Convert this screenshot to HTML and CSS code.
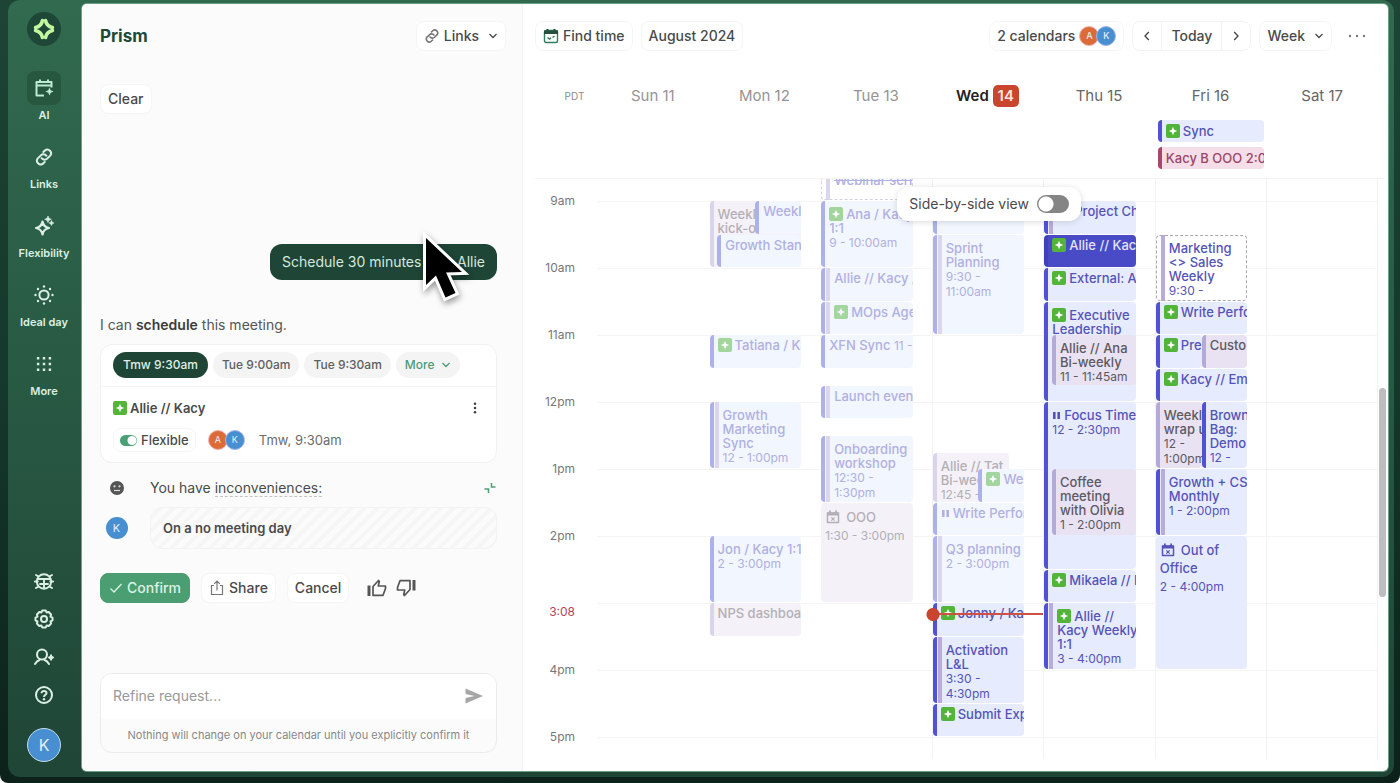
FILE: index.html
```html
<!DOCTYPE html>
<html lang="en">
<head>
<meta charset="utf-8">
<meta name="viewport" content="width=device-width, initial-scale=1">
<title>Prism</title>
<link rel="stylesheet" href="styles.css">
</head>
<body>
<svg class="sprite" aria-hidden="true">
  <symbol id="spark" viewBox="0 0 14 14"><rect width="14" height="14" rx="2" fill="#52b53a"/><path d="M7 2.800 8.200 5.800 11.200 7 8.200 8.200 7 11.200 5.800 8.200 2.800 7 5.800 5.800Z" fill="#fff"/></symbol>
  <symbol id="link" viewBox="0 0 20 20"><g fill="none" stroke="currentColor" stroke-width="2" stroke-linecap="round" stroke-linejoin="round"><path d="M7.600 11.200a3.700 3.700 0 0 0 5.600.4l3-3a3.700 3.700 0 0 0-5.200-5.200L9.300 5"/><path d="M12.400 8.800a3.700 3.700 0 0 0-5.600-.4l-3 3a3.700 3.700 0 0 0 5.200 5.200L10.700 15"/></g></symbol>
  <symbol id="down" viewBox="0 0 10 10"><path d="M1.500 3 5 6.500 8.500 3" fill="none" stroke="currentColor" stroke-width="1.300"/></symbol>
  <symbol id="pause" viewBox="0 0 9 10"><path d="M1 1h2.600v7H1zM5.400 1H8v7H5.400z" fill="currentColor"/></symbol>
  <symbol id="away" viewBox="0 0 14 14"><path d="M1.500 3h11v9.500h-11z" fill="none" stroke="currentColor" stroke-width="1.500" stroke-linejoin="round"/><path d="M1.500 2.500h11v3h-11zM3 .5h1.800v2H3zM9.200.5H11v2H9.200z" fill="currentColor"/><path d="m5.300 7.300 3.400 3.400m0-3.400-3.400 3.400" stroke="currentColor" stroke-width="1.200"/></symbol>
</svg>

<div class="frame">
  <nav class="rail" aria-label="Main">
    <a class="logo" href="#" aria-label="Home"><svg viewBox="0 0 24 24"><g fill="none" stroke="#c3f7a0" stroke-width="3.600" stroke-linejoin="round" stroke-linecap="round"><path d="M10.400 3.600Q9.500 9 3.600 10.600"/><path d="M13.600 3.600Q14.500 9 20.400 10.600"/><path d="M10.400 20.400Q9.500 15 3.600 13.400"/><path d="M13.600 20.400Q14.500 15 20.400 13.400"/></g></svg></a>
    <ul class="menu">
      <li><a class="menu-link is-on" href="#"><span class="tile"><svg viewBox="0 0 20 20"><g fill="none" stroke="currentColor" stroke-width="2" stroke-linejoin="round"><path d="M10 17.500H2.500V4h15v5.500M2.500 7.500h15"/><path d="M6 1.500V5M14 1.500V5"/></g><path d="m15.500 9.500 1.200 2.800 2.800 1.200-2.800 1.200-1.200 2.800-1.200-2.800-2.800-1.200 2.800-1.200Z" fill="currentColor"/></svg></span>AI</a></li>
      <li><a class="menu-link" href="#"><span class="tile"><svg><use href="#link"/></svg></span>Links</a></li>
      <li><a class="menu-link" href="#"><span class="tile"><svg viewBox="0 0 20 20"><path d="M8.500 5.500Q9.500 11 15 12 9.500 13 8.500 18.500 7.500 13 2 12 7.500 11 8.500 5.500Z" fill="none" stroke="currentColor" stroke-width="2.200" stroke-linejoin="round"/><path d="m14 0 1 2.300 2.300 1L15 4.300 14 6.600 13 4.300l-2.300-1L13 2.300ZM17.500 4.500l.8 1.800 1.700.7-1.700.7-.8 1.800-.8-1.800L15 7l1.700-.7Z" fill="currentColor" stroke="currentColor" stroke-width=".6"/></svg></span>Flexibility</a></li>
      <li><a class="menu-link" href="#"><span class="tile"><svg viewBox="0 0 20 20"><circle cx="10" cy="10" r="4.600" fill="none" stroke="currentColor" stroke-width="2"/><g fill="currentColor"><circle cx="10" cy="1.500" r="1.200"/><circle cx="10" cy="18.500" r="1.200"/><circle cx="1.500" cy="10" r="1.200"/><circle cx="18.500" cy="10" r="1.200"/><circle cx="4" cy="4" r="1.200"/><circle cx="16" cy="4" r="1.200"/><circle cx="4" cy="16" r="1.200"/><circle cx="16" cy="16" r="1.200"/></g></svg></span>Ideal day</a></li>
      <li><a class="menu-link" href="#"><span class="tile"><svg viewBox="0 0 20 20"><path d="M2.900 4.200h2.400M8.800 4.200h2.400M14.700 4.200h2.400M2.900 10h2.400M8.800 10h2.400M14.700 10h2.400M2.900 15.800h2.400M8.800 15.800h2.400M14.700 15.800h2.400" stroke="currentColor" stroke-width="2.400"/></svg></span>More</a></li>
    </ul>
    <div class="tools">
      <button aria-label="Report a bug"><svg viewBox="0 0 20 20"><g fill="none" stroke="currentColor" stroke-width="1.900" stroke-linecap="round"><circle cx="10" cy="10.500" r="7.200"/><path d="M3.500 8h13M10 8v9M6 13h8M.8 10.500h3M16.200 10.500h3M4.500 5.500 2 4M15.500 5.500 18 4M4.500 15.500 2 17M15.500 15.500 18 17"/></g></svg></button>
      <button aria-label="Settings"><svg viewBox="0 0 20 20"><g fill="none" stroke="currentColor" stroke-width="2" stroke-linejoin="round"><path d="M8.200 1.500h3.600l.8 2 2.100-.5 2.400 2.500-.6 2.200 2 1v2.700l-2 1 .6 2.200-2.400 2.400-2.100-.5-.8 2H8.200l-.8-2-2.100.5-2.400-2.400.6-2.200-2-1V8.700l2-1-.6-2.200L5.300 3l2.100.5Z"/><circle cx="10" cy="10" r="3"/></g></svg></button>
      <button aria-label="Invite"><svg viewBox="0 0 20 20"><g fill="none" stroke="currentColor" stroke-width="2" stroke-linecap="round"><circle cx="8" cy="7.500" r="5"/><path d="M1 17c1.500-2.500 3-3.500 4.500-4M15 17c-1.500-2.500-3-3.500-4.500-4"/></g><path d="m17 7.500 1 2 2 1-2 1-1 2-1-2-2-1 2-1Z" fill="currentColor" stroke="currentColor"/></svg></button>
      <button aria-label="Help"><svg viewBox="0 0 20 20"><circle cx="10" cy="10" r="8" fill="none" stroke="currentColor" stroke-width="2"/><path d="M7.500 8.300C7.500 5 12.700 5.200 12.500 8.200 12.400 9.800 10 9.800 10 12" fill="none" stroke="currentColor" stroke-width="2"/><circle cx="10" cy="14.200" r="1.200" fill="currentColor"/></svg></button>
    </div>
    <button class="avatar avatar-xl" aria-label="Account">K</button>
  </nav>

  <main class="panel">
    <section class="chat">
      <header class="chat-head">
        <h1>Prism</h1>
        <button class="btn"><svg class="i16 muted"><use href="#link"/></svg>Links<svg class="i10 trail"><use href="#down"/></svg></button>
      </header>
      <button class="btn clear">Clear</button>
      <p class="bubble">Schedule 30 minutes with Allie
        <svg class="pointer" viewBox="0 0 50 76"><path d="M5 9V56L15 46.500 24.500 68.500 34.500 64 25 43.500 41 43Z" fill="#000" stroke="#fff" stroke-width="6" paint-order="stroke"/></svg>
      </p>
      <p class="reply">I can <b>schedule</b> this meeting.</p>
      <article class="card">
        <div class="chips">
          <button class="chip chip-on">Tmw 9:30am</button>
          <button class="chip">Tue 9:00am</button>
          <button class="chip">Tue 9:30am</button>
          <button class="chip chip-more">More<svg class="i10"><use href="#down"/></svg></button>
        </div>
        <div class="card-title">
          <h2><svg class="i14"><use href="#spark"/></svg>Allie // Kacy</h2>
          <button class="plain" aria-label="Options"><svg class="i14" viewBox="0 0 14 14"><g fill="#444"><circle cx="7" cy="2.800" r="1.300"/><circle cx="7" cy="7" r="1.300"/><circle cx="7" cy="11.200" r="1.300"/></g></svg></button>
        </div>
        <div class="card-meta">
          <label class="flexible"><input type="checkbox" class="mini-switch" checked>Flexible</label>
          <span class="pair"><span class="avatar orange">A</span><span class="avatar">K</span></span>
          <span class="when">Tmw, 9:30am</span>
        </div>
      </article>
      <div class="notes">
        <div class="note">
          <svg class="face" viewBox="0 0 16 16"><circle cx="8" cy="8" r="7" fill="#555"/><circle cx="5.500" cy="6.300" r="1.100" fill="#ddd"/><circle cx="10.500" cy="6.300" r="1.100" fill="#ddd"/><path d="M5 10.500h6" stroke="#ddd" stroke-width="1.200"/></svg>
          <p>You have <span class="term">inconveniences:</span></p>
          <button class="plain" aria-label="Collapse"><svg class="i14" viewBox="0 0 14 14"><path d="M8.500 2v4h4M1.500 8h4v4" fill="none" stroke="#4f9f7a" stroke-width="1.600"/></svg></button>
        </div>
        <div class="note">
          <span class="avatar avatar-md">K</span>
          <p class="reason">On a no meeting day</p>
        </div>
      </div>
      <div class="actions">
        <button class="btn primary"><svg class="i14" viewBox="0 0 14 14"><path d="m1.500 7.500 3.500 3.500 7.500-8" fill="none" stroke="currentColor" stroke-width="1.300"/></svg>Confirm</button>
        <button class="btn"><svg class="i16 muted" viewBox="0 0 16 16"><path d="M5 5.500H2.500v9h11v-9H11M8 10.500V1M5.200 3.800 8 1l2.800 2.800" fill="none" stroke="currentColor" stroke-width="1.200"/></svg>Share</button>
        <button class="btn">Cancel</button>
        <span class="thumbs">
          <button class="plain" aria-label="Good"><svg class="i20" viewBox="0 0 20 20"><path d="M.5 7.500h3V18h-3z" fill="#555"/><path d="M6 8.500 11.500 2.500l.8.8L11.300 8H18.500v2.500L16 17.300H6Z" fill="none" stroke="#555" stroke-width="1.700" stroke-linejoin="round"/></svg></button>
          <button class="plain" aria-label="Bad"><svg class="i20" viewBox="0 0 20 20"><path d="M16.500 2h3v10.500h-3z" fill="#555"/><path d="M14 11.500 8.500 17.500l-.8-.8L8.700 12H1.500V9.500L4 2.700H14Z" fill="none" stroke="#555" stroke-width="1.700" stroke-linejoin="round"/></svg></button>
        </span>
      </div>
      <form class="composer">
        <div class="composer-row">
          <input type="text" aria-label="Refine request" placeholder="Refine request...">
          <button class="plain" type="button" aria-label="Send"><svg class="i20" viewBox="0 0 20 20"><path d="M1.500 2.500 19 10 1.500 17.500V12l9-2-9-2Z" fill="#a6a6a6"/></svg></button>
        </div>
        <p>Nothing will change on your calendar until you explicitly confirm it</p>
      </form>
    </section>

    <section class="calendar">
      <header class="bar">
        <button class="btn"><svg class="i16" viewBox="0 0 16 16"><rect x="1.500" y="2.500" width="13" height="12" rx="1.500" fill="none" stroke="#2f7d5b" stroke-width="1.400"/><path d="M1 2.500h14v3.500H1zM3.500 1h2v2h-2zM10.500 1h2v2h-2z" fill="#24513f"/><path d="M4.500 9.500 6.500 11 8 9.800M9.500 9.500l2-1.500" fill="none" stroke="#2f7d5b" stroke-width="1.500"/></svg>Find time</button>
        <button class="btn">August 2024</button>
        <span class="spacer"></span>
        <button class="btn">2 calendars<span class="pair"><span class="avatar orange">A</span><span class="avatar">K</span></span></button>
        <div class="btn-group">
          <button aria-label="Previous week"><svg class="i10" viewBox="0 0 10 10"><path d="M6.800 1 3 5l3.800 4" fill="none" stroke="#444" stroke-width="1.300"/></svg></button>
          <button>Today</button>
          <button aria-label="Next week"><svg class="i10" viewBox="0 0 10 10"><path d="M3.200 1 7 5 3.200 9" fill="none" stroke="#444" stroke-width="1.300"/></svg></button>
        </div>
        <button class="btn">Week<svg class="i10 trail"><use href="#down"/></svg></button>
        <button class="plain dots" aria-label="More"><svg viewBox="0 0 18 6"><g fill="#777"><circle cx="2" cy="3" r="1.200"/><circle cx="9" cy="3" r="1.200"/><circle cx="16" cy="3" r="1.200"/></g></svg></button>
      </header>

      <div class="week days-head">
        <span class="zone">PDT</span>
        <span class="past">Sun 11</span><span class="past">Mon 12</span><span class="past">Tue 13</span>
        <b>Wed <span class="badge">14</span></b>
        <span>Thu 15</span><span>Fri 16</span><span>Sat 17</span>
      </div>

      <div class="week all-day">
        <div class="all-day-list">
          <div class="ev slim"><svg><use href="#spark"/></svg>Sync</div>
          <div class="ev slim rose">Kacy B OOO 2:00</div>
        </div>
      </div>

      <div class="week times">
        <div class="hours">
          <span style="grid-row:2">9am</span><span style="grid-row:6">10am</span><span style="grid-row:10">11am</span><span style="grid-row:14">12pm</span><span style="grid-row:18">1pm</span><span style="grid-row:22">2pm</span><span class="current" style="grid-row:26">3:08</span><span style="grid-row:30">4pm</span><span style="grid-row:34">5pm</span>
        </div>
        <div class="day"></div>
        <div class="day">
          <div class="ev old other tall" style="grid-area:2/1/6/13">Weekl<br>kick-o</div>
          <div class="ev old" style="grid-area:2/7/4/13">Weekl</div>
          <div class="ev old" style="grid-area:4/2/6/13">Growth Stan</div>
          <div class="ev old" style="grid-area:10/1/12/13"><svg><use href="#spark"/></svg>Tatiana / Ka</div>
          <div class="ev old duo tall" style="grid-area:14/1/18/13">Growth<br>Marketing<br>Sync<br><time>12 - 1:00pm</time></div>
          <div class="ev old tall" style="grid-area:22/1/26/13">Jon / Kacy 1:1<br><time>2 - 3:00pm</time></div>
          <div class="ev old other" style="grid-area:26/1/28/13">NPS dashboar</div>
        </div>
        <div class="day">
          <div class="ev old duo maybe cut" style="grid-area:1/1/2/13"><s>Webinar seri</s></div>
          <div class="ev old tall" style="grid-area:2/1/6/13"><svg><use href="#spark"/></svg>Ana / Kacy<br>1:1<br><time>9 - 10:00am</time></div>
          <div class="ev old duo" style="grid-area:6/1/8/13">Allie // Kacy /</div>
          <div class="ev old duo" style="grid-area:8/1/10/13"><svg><use href="#spark"/></svg>MOps Age</div>
          <div class="ev old" style="grid-area:10/1/12/13">XFN Sync <time>11 -</time></div>
          <div class="ev old duo" style="grid-area:13/1/15/13">Launch even</div>
          <div class="ev old duo tall" style="grid-area:16/1/20/13">Onboarding<br>workshop<br><time>12:30 -<br>1:30pm</time></div>
          <div class="ev old other away" style="grid-area:20/1/26/13"><svg><use href="#away"/></svg>OOO<br><time>1:30 - 3:00pm</time></div>
        </div>
        <div class="day lined">
          <div class="ev old" style="grid-area:2/1/4/13"></div>
          <div class="ev old duo tall" style="grid-area:4/1/10/13">Sprint<br>Planning<br><time>9:30 -<br>11:00am</time></div>
          <div class="ev old other tall" style="grid-area:17/1/20/11">Allie // Tat<br>Bi-wee<br><time>12:45 -</time></div>
          <div class="ev old" style="grid-area:18/7/20/13"><svg><use href="#spark"/></svg>We</div>
          <div class="ev old" style="grid-area:20/1/22/13"><svg class="pause"><use href="#pause"/></svg>Write Perfor</div>
          <div class="ev old duo tall" style="grid-area:22/1/26/13">Q3 planning<br><time>2 - 3:00pm</time></div>
          <div class="ev" style="grid-area:26/1/28/13"><svg><use href="#spark"/></svg>Jonny / Kac</div>
          <div class="ev duo tall" style="grid-area:28/1/32/13">Activation<br>L&amp;L<br><time>3:30 -<br>4:30pm</time></div>
          <div class="ev" style="grid-area:32/1/34/13"><svg><use href="#spark"/></svg>Submit Exp</div>
          <div class="now"></div>
        </div>
        <div class="day lined">
          <div class="ev duo" style="grid-area:2/1/4/13"><svg><use href="#spark"/></svg>Project Ch</div>
          <div class="ev solid" style="grid-area:4/1/6/13"><svg><use href="#spark"/></svg>Allie // Kac</div>
          <div class="ev" style="grid-area:6/1/8/13"><svg><use href="#spark"/></svg>External: A</div>
          <div class="ev tall" style="grid-area:8/1/14/13"><svg><use href="#spark"/></svg>Executive<br>Leadership</div>
          <div class="ev other tall" style="grid-area:10/2/13/13">Allie // Ana<br>Bi-weekly<br><time>11 - 11:45am</time></div>
          <div class="ev tall" style="grid-area:14/1/24/13"><svg class="pause"><use href="#pause"/></svg>Focus Time<br><time>12 - 2:30pm</time></div>
          <div class="ev other tall" style="grid-area:18/2/22/13">Coffee<br>meeting<br>with Olivia<br><time>1 - 2:00pm</time></div>
          <div class="ev" style="grid-area:24/1/26/13"><svg><use href="#spark"/></svg>Mikaela // K</div>
          <div class="ev duo tall" style="grid-area:26/1/30/13"><svg><use href="#spark"/></svg>Allie //<br>Kacy Weekly<br>1:1<br><time>3 - 4:00pm</time></div>
        </div>
        <div class="day lined">
          <div class="ev duo tall maybe" style="grid-area:4/1/8/13">Marketing<br>&lt;&gt; Sales<br>Weekly<br><time>9:30 -</time></div>
          <div class="ev" style="grid-area:8/1/10/13"><svg><use href="#spark"/></svg>Write Perfo</div>
          <div class="ev" style="grid-area:10/1/12/7"><svg><use href="#spark"/></svg>Pre</div>
          <div class="ev other" style="grid-area:10/7/12/13">Custo</div>
          <div class="ev" style="grid-area:12/1/14/13"><svg><use href="#spark"/></svg>Kacy // Em</div>
          <div class="ev other tall" style="grid-area:14/1/18/7">Weekl<br>wrap u<br><time>12 -<br>1:00pm</time></div>
          <div class="ev tall" style="grid-area:14/7/18/13">Brown<br>Bag:<br>Demo<br><time>12 -</time></div>
          <div class="ev duo tall" style="grid-area:18/1/22/13">Growth + CS<br>Monthly<br><time>1 - 2:00pm</time></div>
          <div class="ev away" style="grid-area:22/1/30/13"><svg><use href="#away"/></svg>Out of<br>Office<br><time>2 - 4:00pm</time></div>
        </div>
        <div class="day lined last"></div>
        <div class="scrollbar"></div>
        <label class="compare">Side-by-side view<input type="checkbox" class="switch"></label>
      </div>
    </section>
  </main>
</div>
</body>
</html>
```
FILE: styles.css
```css
* { box-sizing: border-box; }

html { background: #fff; }

body {
  margin: 0;
  min-height: 100vh;
  display: flex;
  padding: 0 6px 6px 8px;
  background: linear-gradient(#1d4434, #14382b 50%, #0c211a);
  border-radius: 0 0 8px 8px;
  font-family: Inter, "Liberation Sans", sans-serif;
  font-size: 14px;
  line-height: 20px;
  color: #4a4a4a;
}

h1, h2, p, ul { margin: 0; padding: 0; }

ul { list-style: none; }

button, input {
  font: inherit;
  color: inherit;
}

button {
  border: 0;
  padding: 0;
  background: none;
}

.sprite { position: absolute; width: 0; height: 0; }

.i10 { width: 10px; height: 10px; }
.i14 { width: 14px; height: 14px; }
.i16 { width: 16px; height: 16px; }
.i20 { width: 20px; height: 20px; }
.muted { color: #777; }
.spacer { flex: 1; }

.frame {
  flex: 1;
  display: flex;
  padding: 4px 6px 6px 0;
  background: linear-gradient(#316a4f, #285943 50%, #1f4536);
  border-radius: 12px;
}

/* Navigation rail */
.rail {
  flex: none;
  width: 74px;
  padding: 8px 2px 9px 0;
  display: flex;
  flex-direction: column;
  align-items: center;
  color: #dcefe5;
}

.logo {
  display: grid;
  place-items: center;
  width: 34px;
  height: 34px;
  border-radius: 50%;
  background: #1f4737;
}

.logo svg { width: 24px; height: 24px; }

.menu {
  margin-top: 25px;
  display: flex;
  flex-direction: column;
  gap: 18px;
}

.menu-link {
  display: flex;
  flex-direction: column;
  align-items: center;
  gap: 3px;
  color: inherit;
  text-decoration: none;
  font-size: 11px;
  line-height: 14px;
  font-weight: 600;
}

.tile {
  display: grid;
  place-items: center;
  width: 34px;
  height: 34px;
  border-radius: 8px;
}

.tile svg { width: 20px; height: 20px; }
.is-on .tile { background: #27573f; color: #b9ecd0; }

.tools {
  margin-top: auto;
  display: flex;
  flex-direction: column;
  gap: 18px;
}

.tools button, .tools svg { display: block; width: 20px; height: 20px; }

.avatar {
  display: grid;
  place-items: center;
  flex: none;
  width: 20px;
  height: 20px;
  border: 1px solid #a9b6ea;
  border-radius: 50%;
  background: #478fd1;
  color: #e4f0fb;
  font-size: 9px;
  line-height: 12px;
}

.avatar.orange { background: #dc6b38; border-color: #eab3b3; }
.avatar-md { width: 22px; height: 22px; border: 0; font-size: 11px; }

.avatar-xl {
  width: 34px;
  height: 34px;
  margin-top: 23px;
  border-color: #c3dcea;
  font-size: 16px;
}

.pair { display: flex; }
.pair .avatar + .avatar { margin-left: -3px; }

/* Main panel */
.panel {
  flex: 1;
  min-width: 0;
  display: flex;
  border-radius: 5px;
  background: #fff;
  box-shadow: 0 0 0 1px #6f9f89;
  overflow: hidden;
}

.btn {
  display: inline-flex;
  align-items: center;
  gap: 4px;
  height: 30px;
  padding: 0 7px;
  border: 1px solid #f5f5f5;
  border-radius: 8px;
  background: #fff;
  font-weight: 500;
  white-space: nowrap;
}

.trail { margin-left: 5px; }
.plain { display: grid; place-items: center; }

/* Assistant */
.chat {
  flex: none;
  width: 441px;
  padding: 17px 25px 18px 18px;
  display: flex;
  flex-direction: column;
  border-right: 1px solid #f3f3f3;
  background: #fbfbfb;
}

.chat-head {
  display: flex;
  align-items: center;
  justify-content: space-between;
  margin-right: -9px;
}

h1 { font-size: 17px; line-height: 24px; color: #1d4a38; }
.clear { align-self: flex-start; margin-top: 33px; }

.bubble {
  position: relative;
  align-self: flex-end;
  margin-top: 130px;
  padding: 9px 12px;
  border-radius: 12px;
  background: #1e4535;
  color: #d5e9df;
  line-height: 18px;
}

.pointer {
  position: absolute;
  right: 26px;
  top: -15px;
  width: 50px;
  height: 76px;
  overflow: visible;
  filter: drop-shadow(1px 3px 3px rgba(0, 0, 0, .4));
}

.reply { margin-top: 35px; color: #555; }
.reply b { color: #3c3c3c; font-weight: 600; }

.card {
  margin-top: 9px;
  border: 1px solid #f1f1f1;
  border-radius: 12px;
  background: #fff;
}

.chips {
  display: flex;
  gap: 5px;
  padding: 7px 12px 8px;
  border-bottom: 1px solid #f5f5f5;
}

.chip {
  height: 26px;
  padding: 0 9px;
  border-radius: 13px;
  background: #f4f4f4;
  font-size: 12px;
  font-weight: 500;
  color: #606060;
}

.chip-on { padding: 0 10px; background: #1e4535; color: #e0efe8; }
.chip-more { display: flex; align-items: center; gap: 6px; color: #4c9a78; }

.card-title {
  display: flex;
  align-items: center;
  justify-content: space-between;
  padding: 11px 14px 0 12px;
}

h2 {
  display: flex;
  align-items: center;
  gap: 3px;
  font-size: 13px;
  line-height: 20px;
  font-weight: 600;
}

.card-meta {
  display: flex;
  align-items: center;
  padding: 10px 12px;
}

.flexible {
  display: flex;
  align-items: center;
  gap: 4px;
  height: 24px;
  padding: 0 6px;
  border: 1px solid #f5f5f5;
  border-radius: 8px;
  font-size: 13px;
  font-weight: 500;
}

.card-meta .pair { margin: 0 14px 0 12px; }
.when { font-size: 13px; color: #6b6b6b; }

.mini-switch, .switch {
  appearance: none;
  margin: 0;
  width: 17px;
  height: 11px;
  border-radius: 6px;
  background: radial-gradient(circle at 12px 50%, #fff 4px, #48a074 5px);
}

.notes {
  display: flex;
  flex-direction: column;
  gap: 9px;
  margin-top: 15px;
}

.note {
  display: grid;
  grid-template-columns: 33px 1fr auto;
  column-gap: 17px;
  align-items: center;
}

.note > :first-child { justify-self: center; }
.face { width: 16px; height: 16px; }
.term { border-bottom: 1px dashed #c4c4c4; }

.reason {
  grid-column: 2 / 4;
  padding: 10px 12px;
  border: 1px solid #f3f3f3;
  border-radius: 12px;
  background: repeating-linear-gradient(135deg, #fbfbfb 0 5px, #f6f6f6 5px 9px);
  font-size: 13px;
  font-weight: 600;
}

.actions {
  display: flex;
  align-items: center;
  gap: 11px;
  margin-top: 24px;
}

.primary {
  padding: 0 8px;
  border-color: #4b9d72;
  background: #4b9d72;
  color: #dcf3e6;
}

.thumbs { display: flex; gap: 9px; margin-left: 7px; }

.composer {
  margin-top: auto;
  border: 1px solid #ececec;
  border-radius: 12px;
  overflow: hidden;
}

.composer-row {
  display: flex;
  align-items: center;
  padding: 12px 12px 13px;
  background: #fff;
}

.composer input {
  flex: 1;
  min-width: 0;
  padding: 0;
  border: 0;
  background: none;
  line-height: 20px;
}

.composer input::placeholder { color: #999; opacity: 1; }

.composer p {
  padding: 8px 0 9px;
  text-align: center;
  font-size: 11px;
  line-height: 16px;
  color: #888;
}

/* Calendar */
.calendar {
  flex: 1;
  min-width: 0;
  display: flex;
  flex-direction: column;
}

.bar {
  display: flex;
  align-items: center;
  gap: 8px;
  padding: 17px 14px 0 12px;
}

.btn-group {
  display: flex;
  height: 30px;
  border: 1px solid #f3f3f3;
  border-radius: 8px;
  font-weight: 500;
}

.btn-group button { padding: 0 9px; }
.btn-group button + button { border-left: 1px solid #f3f3f3; }
.dots { width: 34px; height: 30px; }
.dots svg { width: 18px; height: 6px; }

.week {
  display: grid;
  grid-template-columns: 74px repeat(7, minmax(0, 1fr));
  padding-right: 10px;
}

.days-head {
  margin-top: 33px;
  align-items: center;
  text-align: center;
  font-size: 15px;
  line-height: 24px;
  color: #666;
}

.days-head .past { color: #949494; }
.days-head b { color: #222; font-weight: 600; }
.zone { padding-left: 29px; font-size: 10px; color: #8a8a8a; }

.badge {
  display: inline-block;
  padding: 0 5px;
  border-radius: 5px;
  background: #c9452f;
  color: #fbe4de;
  line-height: 22px;
}

.all-day {
  margin: 12px 3px 0 12px;
  padding-right: 7px;
  grid-template-columns: 62px repeat(7, minmax(0, 1fr));
  border-bottom: 1px solid #f3f3f3;
  height: 59px;
}

.all-day-list {
  grid-column: 7;
  display: flex;
  flex-direction: column;
  gap: 5px;
  padding: 0 2px 0 3px;
}

.times {
  position: relative;
  overflow: hidden;
}

/* One row per quarter hour, after the partly scrolled 8am hour */
.hours, .day {
  display: grid;
  grid-template-rows: 22px repeat(8, 17px 17px 17px 16px) 22px;
}

.hours {
  padding-right: 22px;
  justify-items: end;
  font-size: 12px;
  line-height: 16px;
  color: #777;
}

.hours span { margin-top: -8px; }
.hours .current { margin-top: 1px; color: #b3455c; }

.day {
  position: relative;
  grid-template-columns: repeat(12, minmax(0, 1fr));
  padding: 0 19px 0 1px;
  background: linear-gradient(#f4f4f4 1px, transparent 1px) 0 22px / 100% 67px;
}

.lined { border-left: 1px solid #f3f3f3; padding-left: 0; }
.last { border-right: 1px solid #f3f3f3; }

.ev {
  --fill: #e6ecfd;
  --ink: #5553b8;
  --edge: #5152d3;
  --second: #b9acd9;
  margin-bottom: 1px;
  padding: 3px 0 0 8px;
  border-radius: 4px;
  overflow: hidden;
  background: linear-gradient(90deg, var(--edge) 4px, transparent 4px) var(--fill);
  color: var(--ink);
  font-size: 13px;
  line-height: 14px;
  font-weight: 500;
  white-space: nowrap;
}

.ev svg {
  width: 14px;
  height: 14px;
  margin-right: 3px;
  vertical-align: -2px;
}

.ev svg.pause { width: 9px; height: 10px; vertical-align: -1px; }
.ev time { font-size: 12px; font-weight: 400; }
.tall { padding-top: 6px; }

.duo {
  padding-left: 13px;
  background: linear-gradient(90deg, var(--edge) 4px, var(--fill) 4px 5px, var(--second) 5px 9px, transparent 9px) var(--fill);
}

.other { --fill: #e8e2f2; --ink: #5d5962; --edge: #b5a9d8; }
.old { --fill: #f2f6fe; --ink: #b0b0e2; --edge: #adb1ea; --second: #dcd5ee; }
.old.other { --fill: #f4f1f8; --ink: #b3afb6; --edge: #dad3ec; }
.old svg { opacity: .5; }
.old.other svg { opacity: 1; }
.old svg.pause { opacity: 1; }
.solid { --fill: #494ac6; --edge: #4040b8; --ink: #e2e2fa; }

.maybe {
  border: 1px dashed #a9a6b8;
  padding-top: 5px;
  padding-left: 12px;
  background: linear-gradient(90deg, transparent 4px, var(--second) 4px 8px, transparent 8px) #fff;
}

.maybe.old { border-color: #d3d1dc; }

.cut {
  border-top: 0;
  border-radius: 0 0 4px 4px;
  padding: 0 0 0 12px;
}

.cut s { display: block; margin-top: -6px; }

.away {
  padding: 5px 0 0 4px;
  background: var(--fill);
  line-height: 18px;
}

.away svg { margin: 0 6px 0 1px; }

.slim {
  height: 22px;
  margin: 0;
  line-height: 16px;
}

.rose { --fill: #f5dee7; --ink: #9a4668; --edge: #a8476a; }

.now {
  position: absolute;
  left: -7px;
  right: 0;
  top: 429px;
  height: 13px;
  background:
    radial-gradient(circle at 7px 50%, #c9452f 6px, transparent 7px),
    linear-gradient(transparent 5px, #cf5145 5px 7px, transparent 7px) 7px 0 no-repeat;
}

.scrollbar {
  position: absolute;
  right: 2px;
  top: 36%;
  width: 7px;
  height: 36%;
  border-radius: 4px;
  background: #bdbdbd;
}

.compare {
  position: absolute;
  right: 307px;
  top: 8px;
  display: flex;
  align-items: center;
  gap: 8px;
  height: 34px;
  padding: 0 12px;
  border-radius: 12px;
  background: #fff;
  box-shadow: 0 1px 6px rgba(0, 0, 0, .15);
}

.switch {
  width: 32px;
  height: 18px;
  border-radius: 9px;
  background: radial-gradient(circle at 9px 50%, #fff 7px, #858585 8px);
}
```
